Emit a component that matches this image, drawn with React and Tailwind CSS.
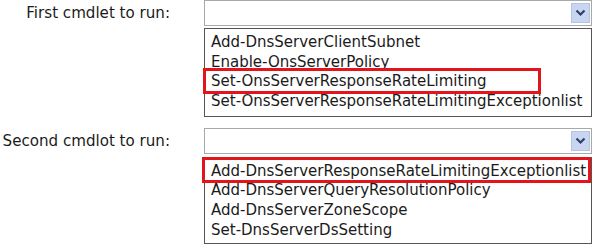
import React from "react";

function Chevron() {
  return (
    <div className="flex h-[20px] w-[19px] items-center justify-center bg-[#c8d6f0] border border-[#b4c4e2]">
      <svg width="11" height="8" viewBox="0 0 11 8">
        <path d="M1.5 1.5 L5.5 5.5 L9.5 1.5" fill="none" stroke="#2f3d6b" strokeWidth="2.2" />
      </svg>
    </div>
  );
}

function Select() {
  return (
    <div className="flex h-[26px] w-[388px] items-center justify-end border border-[#a9a9a9] bg-white pr-[1px]">
      <Chevron />
    </div>
  );
}

function List({ items, boxClass, padClass }) {
  return (
    <div className={"relative w-[388px] border border-[#555] bg-white pl-[6px] " + padClass}>
      {items.map((t, i) => (
        <div key={i} className="h-[19.7px] leading-[19.7px] whitespace-nowrap">
          {t}
        </div>
      ))}
      <div className={"absolute border-[3px] border-[#e3141c] " + boxClass} />
    </div>
  );
}

function Label({ children }) {
  return (
    <div className="flex w-[170px] shrink-0 justify-end pt-[3px] text-[15.1px] leading-[20px] whitespace-nowrap">
      <span>{children}</span>
    </div>
  );
}

export default function App() {
  return (
    <div className="relative h-[246px] w-[593px] overflow-hidden bg-white text-[15px] text-[#1b1b1b] font-['DejaVu_Sans',sans-serif]">
      <div className="flex">
        <Label>First cmdlet to run:</Label>
        <div className="ml-[34px] flex flex-col">
          <Select />
          <div className="mt-[2px]">
            <List
              items={[
                "Add-DnsServerClientSubnet",
                "Enable-OnsServerPolicy",
                "Set-OnsServerResponseRateLimiting",
                "Set-OnsServerResponseRateLimitingExceptionlist",
              ]}
              padClass="pt-[4px] pb-[4px]"
              boxClass="left-[-2px] top-[39px] h-[26px] w-[338px]"
            />
          </div>
        </div>
      </div>
      <div className="mt-[11px] flex">
        <Label>Second cmdlot to run:</Label>
        <div className="ml-[34px] flex flex-col">
          <Select />
          <div className="mt-[3px]">
            <List
              items={[
                "Add-DnsServerResponseRateLimitingExceptionlist",
                "Add-DnsServerQueryResolutionPolicy",
                "Add-DnsServerZoneScope",
                "Set-DnsServerDsSetting",
              ]}
              padClass="pt-[4px] pb-[2px]"
              boxClass="left-[-3px] top-[-1px] h-[26px] w-[389px]"
            />
          </div>
        </div>
      </div>
    </div>
  );
}
